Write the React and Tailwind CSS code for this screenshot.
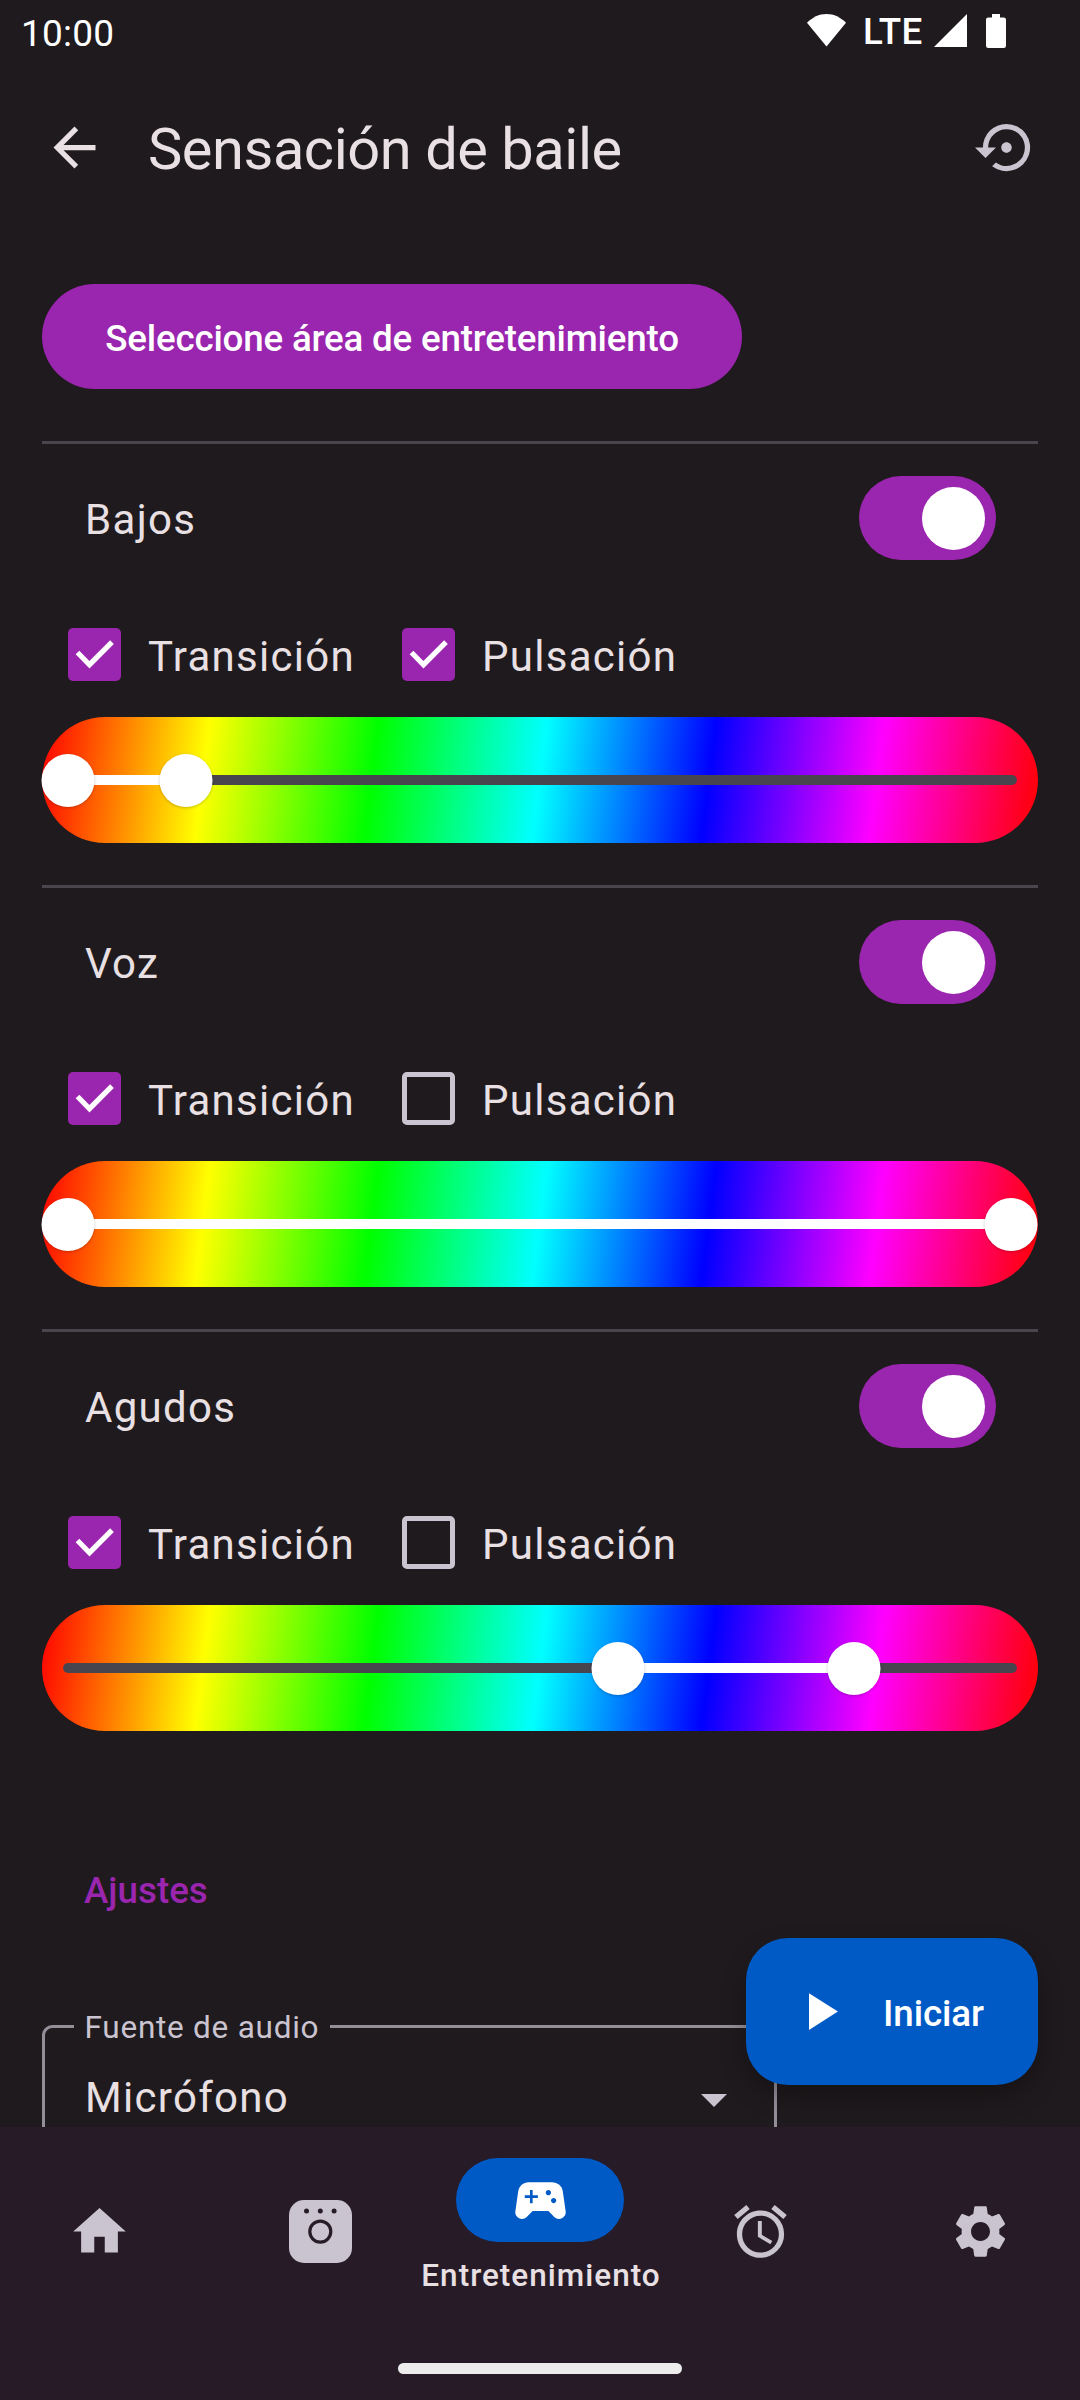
import React from "react";
import { MdArrowBack, MdSettingsBackupRestore, MdHome, MdSportsEsports, MdAlarm, MdSettings, MdPlayArrow } from "react-icons/md";

function StatusBar() {
  return (
    <div className="flex h-[63px] shrink-0 items-start text-white">
      <span className="ml-[21px] mt-[12px] text-[37px] leading-[43px] tracking-[0.2px]">10:00</span>
      <svg className="ml-auto mt-[14px] h-[33px] w-[39px]" viewBox="0 0 39 33" fill="currentColor">
        <path d="M0 8.8C5.3 3.4 12 0 19.5 0S33.7 3.4 39 8.8L19.5 32.5z" />
      </svg>
      <span className="ml-[17px] mt-[10px] w-[68px] text-[36.75px] font-medium leading-[43px] tracking-[0.4px]">LTE</span>
      <svg className="ml-[3px] mt-[14px] h-[33px] w-[33px]" viewBox="0 0 33 33" fill="currentColor">
        <path d="M33 0v33H0z" />
      </svg>
      <svg className="ml-[19px] mr-[74px] mt-[14px] h-[34px] w-[20px]" viewBox="0 0 20 34" fill="currentColor">
        <path d="M6 0h8v3.400h3.700Q20 3.400 20 5.700v26Q20 34 17.700 34H2.300Q0 34 0 31.700v-26Q0 3.400 2.300 3.400H6z" />
      </svg>
    </div>
  );
}

function Checkbox({ checked, label }) {
  return (
    <label className="flex items-center">
      {checked ? (
        <span className="flex size-[53px] items-center justify-center rounded-[5px] bg-[#9a25ae]">
          <svg className="size-[53px]" viewBox="0 0 53 53" fill="none" stroke="white" strokeWidth="5.2">
            <path d="M9.500 24.500 21.500 36.700 44 14.100" />
          </svg>
        </span>
      ) : (
        <span className="size-[53px] rounded-[5px] border-[5px] border-[#cac4d0]" />
      )}
      <span className="ml-[27px] mt-[4px] whitespace-nowrap text-[42px] leading-[50px] tracking-[1.28px]">{label}</span>
    </label>
  );
}

function HueSlider({ from, to }) {
  return (
    <div className="relative h-[126px] w-full rounded-full bg-[linear-gradient(97.21deg,#f00,#ff0,#0f0,#0ff,#00f,#f0f,#f00)]">
      <div className="absolute left-[21px] right-[21px] top-[57.75px] h-[10.5px] rounded-full bg-[#49454f]" />
      <div className="absolute top-[57.75px] h-[10.5px] bg-white" style={{ left: from, width: to - from }} />
      {[from, to].map((x) => (
        <div
          key={x}
          className="absolute top-[37px] size-[53px] -translate-x-1/2 rounded-full bg-white shadow-[0_1px_3px_rgba(0,0,0,0.22)]"
          style={{ left: x }}
        />
      ))}
    </div>
  );
}

function Band({ name, transition, pulse, from, to }) {
  return (
    <section className="flex h-[444px] flex-col border-t-[3px] border-[#49454f]">
      <div className="mt-[32px] flex h-[84px] items-center justify-between pl-[43px] pr-[42px]">
        <span className="mt-[4px] text-[42px] leading-[50px] tracking-[1.31px]">{name}</span>
        <div className="flex h-[84px] w-[137px] items-center justify-end rounded-full bg-[#9a25ae] pr-[11px]">
          <div className="size-[63px] rounded-full bg-white" />
        </div>
      </div>
      <div className="mt-[68px] flex h-[53px] items-center pl-[26px]">
        <div className="w-[334px]">
          <Checkbox checked={transition} label="Transición" />
        </div>
        <Checkbox checked={pulse} label="Pulsación" />
      </div>
      <div className="mt-[36px]">
        <HueSlider from={from} to={to} />
      </div>
    </section>
  );
}

function BridgeIcon() {
  return (
    <svg className="ml-px size-[63px]" viewBox="0 0 63 63">
      <rect width="63" height="63" rx="15" fill="#cac4d0" />
      <g fill="#271b28">
        <circle cx="17.500" cy="11" r="2.500" />
        <circle cx="31.300" cy="11" r="2.500" />
        <circle cx="45.100" cy="11" r="2.500" />
      </g>
      <circle cx="31.300" cy="31.600" r="10.500" fill="none" stroke="#271b28" strokeWidth="3.200" />
    </svg>
  );
}

function NavItem({ children }) {
  return <div className="flex w-[220.5px] shrink-0 justify-center pt-[73px]">{children}</div>;
}

export default function App() {
  return (
    <div className="flex h-[2400px] w-[1080px] flex-col overflow-hidden bg-[#1f1a1d] font-[Roboto,sans-serif] text-[#e9e0e4]">
      <StatusBar />
      <header className="flex h-[168px] shrink-0 items-center pl-[43px] pr-[42px]">
        <MdArrowBack className="size-[63px]" />
        <h1 className="ml-[42px] mt-[3px] text-[57.75px] leading-[68px] tracking-[-0.43px]">Sensación de baile</h1>
        <MdSettingsBackupRestore className="ml-auto size-[63px] text-[#cac4d0]" />
      </header>

      <div className="relative flex h-[1896px] shrink-0 flex-col overflow-hidden px-[42px] pt-[53px]">
        <button className="h-[105px] w-[700px] shrink-0 rounded-full bg-[#9a25ae] pt-[4px] text-[36.75px] font-medium tracking-[-0.19px] text-white">
          Seleccione área de entretenimiento
        </button>
        <div className="mt-[52px]">
          <Band name="Bajos" transition pulse from={26} to={144} />
          <Band name="Voz" transition from={26} to={969} />
          <Band name="Agudos" transition from={576} to={812} />
        </div>
        <h2 className="mt-[96px] pl-[42px] text-[36.75px] font-medium leading-[44px] text-[#9a25ae]">Ajustes</h2>
        <fieldset className="mt-[95px] h-[200px] w-[735px] shrink-0 rounded-[10.5px] border-[3px] border-[#938f99] pl-[29px]">
          <legend className="h-[37px] px-[10.5px] text-[31.5px] leading-[39px] tracking-[0.75px] text-[#cac4d0]">Fuente de audio</legend>
          <div className="mt-[28px] flex items-center justify-between pl-[11px] pr-[47px]">
            <span className="text-[42px] leading-[50px] tracking-[1.31px]">Micrófono</span>
            <svg className="mt-[4px] h-[13px] w-[26px]" viewBox="0 0 26 13" fill="#cac4d0">
              <path d="M0 0h26L13 13z" />
            </svg>
          </div>
        </fieldset>
        <button className="absolute left-[746px] top-[1707px] flex h-[147px] w-[292px] items-center rounded-[42px] bg-[#005ac5] pl-[42px] text-white shadow-[0_12px_24px_rgba(0,0,0,0.28)]">
          <MdPlayArrow className="size-[63px]" />
          <span className="ml-[32px] mt-[3px] text-[36.75px] font-medium leading-[43px] tracking-[-0.1px]">Iniciar</span>
        </button>
      </div>

      <nav className="flex h-[273px] shrink-0 flex-col bg-[#271b28]">
        <div className="flex h-[236px] justify-center">
          <NavItem><MdHome className="size-[63px] text-[#cac4d0]" /></NavItem>
          <NavItem><BridgeIcon /></NavItem>
          <div className="flex w-[220px] shrink-0 flex-col items-center pt-[31px]">
            <div className="flex h-[84px] w-[168px] items-center justify-center rounded-full bg-[#005ac5]">
              <MdSportsEsports className="size-[63px] text-white" />
            </div>
            <span className="ml-[2px] mt-[15px] text-[31.5px] font-medium leading-[37px] tracking-[1px]">Entretenimiento</span>
          </div>
          <NavItem><MdAlarm className="size-[63px] text-[#cac4d0]" /></NavItem>
          <NavItem><MdSettings className="size-[63px] text-[#cac4d0]" /></NavItem>
        </div>
        <div className="mx-auto h-[11px] w-[284px] rounded-full bg-[#ececec]" />
      </nav>
    </div>
  );
}
